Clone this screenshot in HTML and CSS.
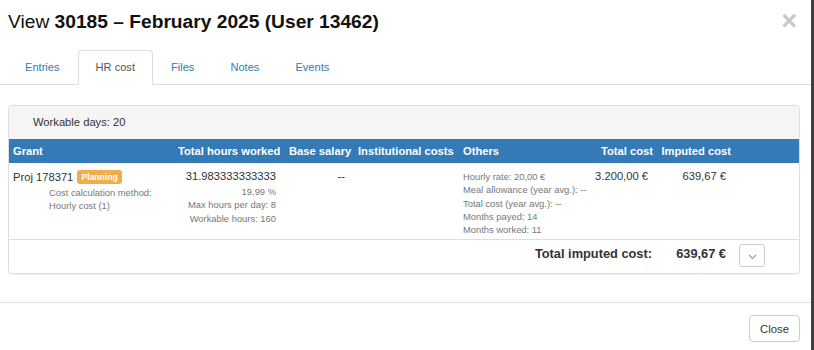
FILE: index.html
```html
<!DOCTYPE html>
<html lang="en">
<head>
    <meta charset="UTF-8">
    <title>View 30185 - HR cost</title>
    <link rel="stylesheet" href="styles.css">
</head>
<body>
    <div class="modal">
        <div class="modal-header">
            <h4 class="modal-title">View <b>30185 – February 2025 (User 13462)</b></h4>
            <span class="close">&times;</span>
        </div>

        <ul class="nav-tabs">
            <li><a href="#">Entries</a></li>
            <li class="active"><a href="#">HR cost</a></li>
            <li><a href="#">Files</a></li>
            <li><a href="#">Notes</a></li>
            <li><a href="#">Events</a></li>
        </ul>

        <div class="modal-body">
            <div class="panel">
                <div class="panel-heading">Workable days: 20</div>
                <table class="cost-table">
                    <thead>
                        <tr>
                            <th class="col-grant">Grant</th>
                            <th class="col-hours">Total hours worked</th>
                            <th class="col-salary">Base salary</th>
                            <th class="col-inst">Institutional costs</th>
                            <th class="col-others">Others</th>
                            <th class="col-total num">Total cost</th>
                            <th class="col-imputed num">Imputed cost</th>
                            <th></th>
                        </tr>
                    </thead>
                    <tbody>
                        <tr class="data-row">
                            <td>
                                Proj 178371 <span class="label">Planning</span>
                                <div class="sub indent first">Cost calculation method:</div>
                                <div class="sub indent">Hourly cost (1)</div>
                            </td>
                            <td class="num">
                                31.983333333333
                                <div class="sub first">19,99 %</div>
                                <div class="sub">Max hours per day: 8</div>
                                <div class="sub">Workable hours: 160</div>
                            </td>
                            <td class="num">--</td>
                            <td></td>
                            <td class="others">
                                <div class="sub">Hourly rate: 20,00 €</div>
                                <div class="sub">Meal allowance (year avg.): --</div>
                                <div class="sub">Total cost (year avg.): --</div>
                                <div class="sub">Months payed: 14</div>
                                <div class="sub">Months worked: 11</div>
                            </td>
                            <td class="num">3.200,00 €</td>
                            <td class="num">639,67 €</td>
                            <td></td>
                        </tr>
                        <tr class="total-row">
                            <td colspan="6" class="num label-cell">Total imputed cost:</td>
                            <td class="num">639,67 €</td>
                            <td>
                                <button class="btn-toggle">
                                    <svg width="9" height="6" viewBox="0 0 9 6"><path d="M1 1l3.5 3.5L8 1" fill="none" stroke="#999" stroke-width="1.1"/></svg>
                                </button>
                            </td>
                        </tr>
                    </tbody>
                </table>
            </div>
        </div>

        <div class="modal-footer">
            <button class="btn">Close</button>
        </div>
    </div>
</body>
</html>
```

FILE: styles.css
```css
body {
    margin: 0;
    background-color: #3f4146;
    font-family: "Liberation Sans", Arial, sans-serif;
    color: #333;
}
.modal {
    width: 811px;
    height: 350px;
    background: white;
}
.modal-header {
    display: flex;
    justify-content: space-between;
    padding: 10px 14px 0 8px;
    height: 40px;
}
.modal-title {
    margin: 0;
    font-size: 19.2px;
    font-weight: normal;
    line-height: 24px;
    color: #111;
}
.close {
    font-size: 27px;
    font-weight: bold;
    color: #c8c8c8;
    line-height: 22px;
}
.nav-tabs {
    display: flex;
    list-style: none;
    margin: 0;
    padding: 0 0 0 7px;
    border-bottom: 1px solid #ddd;
}
.nav-tabs li {
    margin-bottom: -1px;
}
.nav-tabs a {
    display: block;
    padding: 0 17px;
    height: 33px;
    line-height: 33px;
    font-size: 11.1px;
    color: #337ab7;
    text-decoration: none;
    border: 1px solid transparent;
    border-radius: 4px 4px 0 0;
}
.nav-tabs .active a {
    color: #555;
    border-color: #ddd #ddd transparent;
    background: white;
}
.modal-body {
    padding: 20px 11px 28px 8px;
}
.panel {
    border: 1px solid #ddd;
    border-radius: 4px;
    box-shadow: 0 1px 1px rgba(0, 0, 0, 0.05);
}
.panel-heading {
    background-color: #f5f5f5;
    height: 33px;
    line-height: 33px;
    padding-left: 24px;
    font-size: 11.2px;
    border-radius: 3px 3px 0 0;
}
.cost-table {
    width: 100%;
    border-collapse: collapse;
    table-layout: fixed;
    font-size: 11.2px;
}
.cost-table th {
    background-color: #337ab7;
    color: white;
    text-align: left;
    height: 24px;
    padding: 0 4px;
    white-space: nowrap;
}
.cost-table th.num {
    text-align: right;
}
.col-grant { width: 157px; }
.col-hours { width: 103px; }
.col-salary { width: 61px; }
.col-inst { width: 97px; }
.col-others { width: 124px; }
.col-total { width: 58px; }
.col-imputed { width: 70px; }
.cost-table td {
    vertical-align: top;
    padding: 7px 4px 0;
    white-space: nowrap;
}
.cost-table td.num {
    text-align: right;
    padding-right: 9px;
}
.data-row td {
    height: 69px;
    border-bottom: 1px solid #ddd;
    line-height: 13px;
}
.sub {
    font-size: 9.4px;
    color: #777;
    line-height: 13.3px;
}
.sub.first {
    margin-top: 2px;
}
.sub.indent {
    padding-left: 36px;
}
.label {
    display: inline-block;
    margin-left: 1px;
    background-color: #f0ad4e;
    color: white;
    font-size: 8.6px;
    font-weight: bold;
    padding: 0 4px;
    line-height: 14px;
    border-radius: 3px;
    vertical-align: 1px;
}
.total-row td {
    font-size: 12.8px;
    font-weight: bold;
    height: 27px;
    padding-top: 6px;
}
.total-row td.label-cell {
    padding-right: 5px;
}
.btn-toggle {
    display: block;
    width: 26px;
    height: 23px;
    margin-top: -2px;
    border: 1px solid #ccc;
    border-radius: 3px;
    background: white;
    padding: 0;
}
.modal-footer {
    border-top: 1px solid #e5e5e5;
    padding: 12px 11px;
    display: flex;
    justify-content: flex-end;
}
.btn {
    font-family: "Liberation Sans", Arial, sans-serif;
    font-size: 11.3px;
    color: #333;
    background: white;
    border: 1px solid #ccc;
    border-radius: 4px;
    padding: 0 10px;
    height: 27px;
}
```
